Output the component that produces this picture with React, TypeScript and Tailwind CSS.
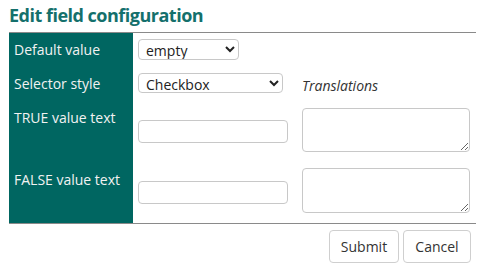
export default function App() {
  const label = "bg-[#006661] text-[#f2f2f2] pl-[5px]";
  const field =
    "border border-[#c8c8c8] rounded-[4px] bg-white text-[14px] text-[#222] outline-none";
  return (
    <div className="w-[483px] h-[273px] bg-white font-['Open_Sans',sans-serif] text-[14px]">
      <h1 className="pl-[9px] pt-[3px] h-[32px] text-[18px] font-bold tracking-[-0.5px] text-[#14706c] leading-[24px]">
        Edit field configuration
      </h1>
      <div className="mx-[9px] w-[467px] border-t border-b border-[#8a8a8a]">
        <div className="grid grid-cols-[124px_169px_1fr]">
          {/* row 1 */}
          <div className={`${label} h-[33px] flex items-center`}>Default value</div>
          <div className="pl-[5px] pt-[6px]">
            <select className={`${field} w-[101px] h-[21px] pl-[3px]`} defaultValue="empty">
              <option value="empty">empty</option>
              <option value="true">TRUE</option>
              <option value="false">FALSE</option>
            </select>
          </div>
          <div />

          {/* row 2 */}
          <div className={`${label} h-[34px] flex items-center`}>Selector style</div>
          <div className="pl-[5px] pt-[7px]">
            <select className={`${field} w-[145px] h-[20px] pl-[3px]`} defaultValue="checkbox">
              <option value="checkbox">Checkbox</option>
              <option value="radio">Radio buttons</option>
              <option value="select">Dropdown</option>
            </select>
          </div>
          <div className="flex items-center pt-[4px] italic text-[#333]">Translations</div>

          {/* row 3 */}
          <div className={`${label} h-[60px] pt-[9px] leading-[17px]`}>TRUE value text</div>
          <div className="pl-[5px] pt-[20px]">
            <input className={`${field} w-[150px] h-[23px] px-[4px]`} />
          </div>
          <div className="pt-[8px]">
            <textarea className={`${field} w-[168px] h-[44px] block`} />
          </div>

          {/* row 4 */}
          <div className={`${label} h-[63px] pt-[11px] leading-[17px]`}>FALSE value text</div>
          <div className="pl-[5px] pt-[21px]">
            <input className={`${field} w-[150px] h-[23px] px-[4px]`} />
          </div>
          <div className="pt-[8px]">
            <textarea className={`${field} w-[168px] h-[45px] block`} />
          </div>
        </div>
      </div>
      <div className="flex justify-end gap-[4px] pr-[12px] pt-[6px]">
        <button className="w-[70px] h-[33px] border border-[#cfcfcf] rounded-[4px] bg-white text-[#333] text-[14px]">
          Submit
        </button>
        <button className="w-[68px] h-[33px] border border-[#cfcfcf] rounded-[4px] bg-white text-[#333] text-[14px]">
          Cancel
        </button>
      </div>
    </div>
  );
}
